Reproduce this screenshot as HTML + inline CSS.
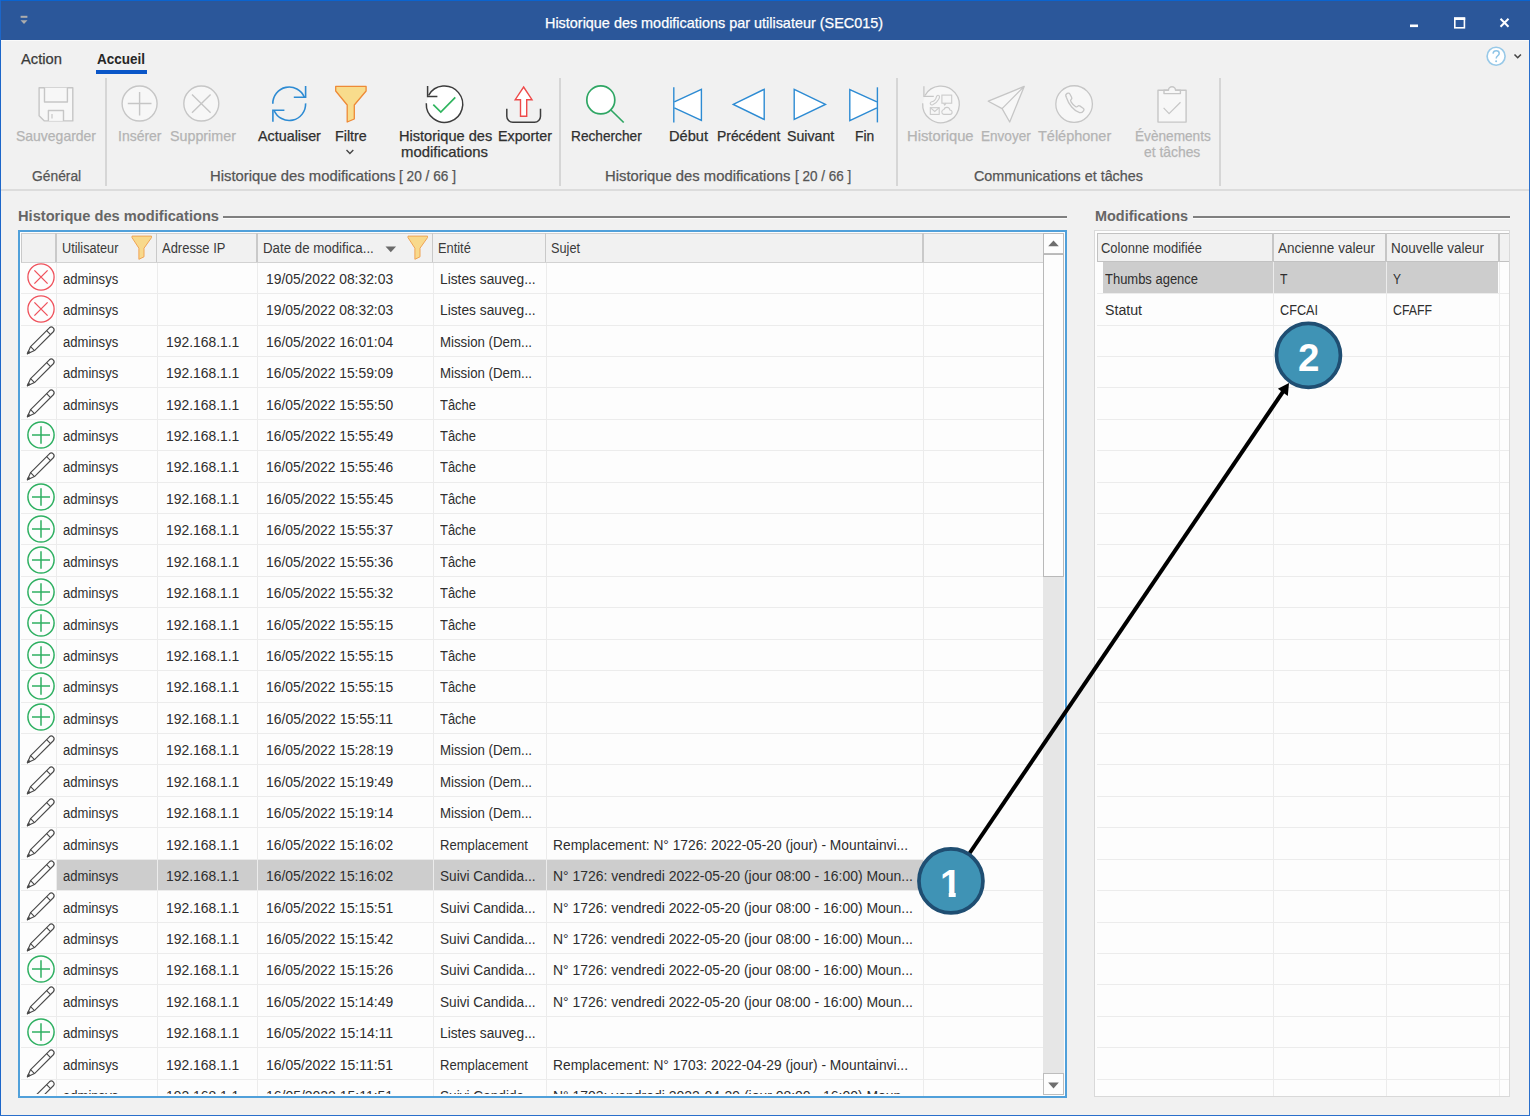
<!DOCTYPE html>
<html lang="fr"><head><meta charset="utf-8"><title>Historique des modifications par utilisateur (SEC015)</title>
<style>
html,body{margin:0;padding:0}
body{width:1530px;height:1116px;overflow:hidden;background:#f1f1f1;position:relative;font-family:"Liberation Sans",sans-serif;color:#333}
.r{position:absolute}
.t{position:absolute;white-space:pre;line-height:20px;height:20px;transform-origin:0 50%;color:#2b2b2b}
.rib{font:14.5px/20px "Liberation Sans",sans-serif}
.tab{font:15px/20px "Liberation Sans",sans-serif}
.tabb{font:bold 15px/20px "Liberation Sans",sans-serif}
.ttl{font:14.5px/20px "Liberation Sans",sans-serif}
.grid{font:15.5px/20px "Liberation Sans",sans-serif}
.gb{font:bold 15px/20px "Liberation Sans",sans-serif}
svg{position:absolute;overflow:visible}
.rib,.tab,.ttl{-webkit-text-stroke:0.25px currentColor}
</style></head>
<body>
<div class="r" style="left:0px;top:0px;width:1530px;height:40px;background:#2b579a;"></div>
<div class="r" style="left:0px;top:0px;width:1530px;height:1px;background:#0a64d0;"></div>
<div class="r" style="left:0px;top:0px;width:1.2px;height:1116px;background:#1c66c9;"></div>
<div class="r" style="left:1528.6px;top:40px;width:1.4px;height:1076px;background:#2a6fcb;"></div>
<div class="r" style="left:0px;top:1114.7px;width:1530px;height:1.3px;background:#2a6fcb;"></div>
<svg style="left:20px;top:15px" width="8" height="10" viewBox="0 0 8 10"><rect x="0.600" y="0.800" width="6.800" height="2" fill="#adadad"/><path d="M0.500 5.200h7L4 9.100z" fill="#adadad"/></svg>
<span class="t ttl" style="left:545.0px;top:12.6px;transform:scaleX(0.9938);color:#ffffff;">Historique des modifications par utilisateur (SEC015)</span>
<svg style="left:1400px;top:10.600px" width="120" height="24" viewBox="0 0 120 24"><rect x="10" y="13.5" width="8" height="2.6" fill="#fff"/><rect x="54.8" y="7.2" width="9.6" height="9.6" fill="none" stroke="#fff" stroke-width="1.6"/><rect x="54" y="6.4" width="11.2" height="2.6" fill="#fff"/><path d="M100.5 7.8l8 8m0-8l-8 8" stroke="#fff" stroke-width="2" fill="none"/></svg>
<svg style="left:1485px;top:46px" width="40" height="22" viewBox="0 0 40 22"><circle cx="11.100" cy="10.200" r="9" fill="#ffffff" stroke="#98c9e8" stroke-width="1.600"/><path d="M8 7.6c.3-2 1.7-2.8 3.200-2.800 1.800 0 3 1 3 2.600 0 2.200-3 2.600-3 5" fill="none" stroke="#8fc4e6" stroke-width="1.500"/><circle cx="11.100" cy="15.200" r="1" fill="#8fc4e6"/><path d="M29.500 8.500l3.200 3.200 3.200-3.200" fill="none" stroke="#444" stroke-width="1.600"/></svg>
<span class="t tab" style="left:21.0px;top:48.9px;transform:scaleX(0.9831);color:#3a3a3a;">Action</span>
<span class="t tabb" style="left:97.0px;top:48.9px;transform:scaleX(0.8996);color:#262626;">Accueil</span>
<div class="r" style="left:96px;top:70px;width:51px;height:4px;background:#0a56c8;"></div>
<div class="r" style="left:1px;top:189.2px;width:1527.6px;height:1.8px;background:#dcdcdc;"></div>
<div class="r" style="left:1px;top:40px;width:1527.6px;height:1px;background:#fafafa;"></div>
<div class="r" style="left:105px;top:78px;width:1.5px;height:108px;background:#d6d6d6;"></div>
<div class="r" style="left:559px;top:78px;width:1.5px;height:108px;background:#d6d6d6;"></div>
<div class="r" style="left:896px;top:78px;width:1.5px;height:108px;background:#d6d6d6;"></div>
<div class="r" style="left:1219px;top:78px;width:1.5px;height:108px;background:#d6d6d6;"></div>
<span class="t rib" style="left:16.1px;top:125.9px;transform:scaleX(0.9635);color:#b4b4b4;">Sauvegarder</span>
<span class="t rib" style="left:118.0px;top:125.9px;transform:scaleX(0.9637);color:#b4b4b4;">Insérer</span>
<span class="t rib" style="left:169.6px;top:125.9px;transform:scaleX(0.9852);color:#b4b4b4;">Supprimer</span>
<span class="t rib" style="left:258.3px;top:125.9px;transform:scaleX(0.9879);color:#2f2f2f;">Actualiser</span>
<span class="t rib" style="left:335.3px;top:125.9px;transform:scaleX(0.9865);color:#2f2f2f;">Filtre</span>
<span class="t rib" style="left:398.6px;top:125.9px;transform:scaleX(1.0055);color:#2f2f2f;">Historique des</span>
<span class="t rib" style="left:401.1px;top:141.9px;transform:scaleX(1.0269);color:#2f2f2f;">modifications</span>
<span class="t rib" style="left:497.5px;top:125.9px;transform:scaleX(0.9834);color:#2f2f2f;">Exporter</span>
<span class="t rib" style="left:570.8px;top:125.9px;transform:scaleX(0.9433);color:#2f2f2f;">Rechercher</span>
<span class="t rib" style="left:668.9px;top:125.9px;transform:scaleX(1.0077);color:#2f2f2f;">Début</span>
<span class="t rib" style="left:717.4px;top:125.9px;transform:scaleX(0.9575);color:#2f2f2f;">Précédent</span>
<span class="t rib" style="left:786.9px;top:125.9px;transform:scaleX(0.9757);color:#2f2f2f;">Suivant</span>
<span class="t rib" style="left:854.7px;top:125.9px;transform:scaleX(0.9526);color:#2f2f2f;">Fin</span>
<span class="t rib" style="left:907.4px;top:125.9px;transform:scaleX(1.0202);color:#b4b4b4;">Historique</span>
<span class="t rib" style="left:981.4px;top:125.9px;transform:scaleX(0.9342);color:#b4b4b4;">Envoyer</span>
<span class="t rib" style="left:1037.9px;top:125.9px;transform:scaleX(0.9978);color:#b4b4b4;">Téléphoner</span>
<span class="t rib" style="left:1134.7px;top:125.9px;transform:scaleX(0.9403);color:#b4b4b4;">Évènements</span>
<span class="t rib" style="left:1144.2px;top:141.9px;transform:scaleX(0.9568);color:#b4b4b4;">et tâches</span>
<span class="t rib" style="left:31.5px;top:166.1px;transform:scaleX(0.9536);color:#555555;">Général</span>
<span class="t rib" style="left:209.5px;top:166.1px;transform:scaleX(1.0218);color:#555555;">Historique des modifications</span>
<span class="t rib" style="left:399.3px;top:166.1px;transform:scaleX(0.9426);color:#555555;">[ 20 / 66 ]</span>
<span class="t rib" style="left:604.8px;top:166.1px;transform:scaleX(1.0218);color:#555555;">Historique des modifications</span>
<span class="t rib" style="left:794.6px;top:166.1px;transform:scaleX(0.9294);color:#555555;">[ 20 / 66 ]</span>
<span class="t rib" style="left:974.0px;top:166.1px;transform:scaleX(0.9885);color:#555555;">Communications et tâches</span>
<svg style="left:345px;top:148px" width="10" height="8" viewBox="0 0 10 8"><path d="M1.500 2l3.400 3.400L8.300 2" fill="none" stroke="#444" stroke-width="1.4"/></svg>
<svg style="left:0;top:80px" width="1530" height="48" viewBox="0 80 1530 48"><g fill="#f7f7f7" stroke="#c6c6c6" stroke-width="1.4" stroke-linejoin="round"><path d="M39.100 87.700H72.800V120.900H44.400L39.100 115.700z"/><path d="M44.500 87.700V102H67.400V87.700"/><path d="M48.400 120.900V110.500H63.500V120.900"/><path d="M52 114v4.500" stroke-width="1.200"/></g><g fill="#f7f7f7" stroke="#c6c6c6" stroke-width="1.4"><circle cx="139.600" cy="103.550" r="17.500"/><path d="M127.800 103.550H151.500M139.600 92.100V115.600" fill="none"/><circle cx="201.300" cy="103.550" r="17.500"/><path d="M192 94.600L210.600 112.700M210.600 94.600L192 112.700" fill="none"/></g><g fill="none" stroke="#2d8bd3" stroke-width="1.600"><path d="M272.800 103.800A16.400 16.400 0 0 1 304.400 97.300"/><path d="M305.600 86.100V97.300H293.800"/><path d="M305.600 103.400A16.400 16.400 0 0 1 274 110.200"/><path d="M272.900 121.700V110.200H284.400"/></g><path d="M335.700 86.400H366.100V91L354.300 105V119L347.200 122V105L335.700 91z" fill="#f8dc8c" stroke="#ee8a37" stroke-width="1.300" stroke-linejoin="round"/><g fill="none" stroke="#3d3d3d" stroke-width="1.500"><path d="M428.600 95.300A18.200 18.200 0 1 1 426.300 103.300" fill="#fff"/><path d="M427.600 86V96.500H437.400"/><path d="M433.300 104.700L440.800 112L455.300 97.400" stroke="#2fb45e" stroke-width="1.700"/></g><path d="M506.800 108.800V116.300a6 6 0 0 0 6 6H534.500a6 6 0 0 0 6-6V108.800" fill="none" stroke="#3d3d3d" stroke-width="1.500"/><path d="M523.600 87L532 99.700H526.700V116.300H520.500V99.700H515.200z" fill="#fff" stroke="#ee4a4a" stroke-width="1.400" stroke-linejoin="miter"/><circle cx="600.800" cy="99.900" r="14" fill="#fff" stroke="#2fa664" stroke-width="1.700"/><path d="M610.900 110L623.700 122.500" stroke="#2fa664" stroke-width="1.700"/><g fill="#fff" stroke="#2d8bd3" stroke-width="1.400" stroke-linejoin="miter"><path d="M674.300 101.800L701.400 89.300V120.500L674.300 107.800"/><path d="M673.800 87.300V122.500" /><path d="M733.300 104.400L764.200 89.300V119.500z"/><path d="M825.400 104.400L794.200 89.300V119.500z"/><path d="M876.900 101.800L849.800 89.500V120.600L876.900 107.800"/><path d="M877.400 87.300V122.400"/></g><g fill="none" stroke="#c6c6c6" stroke-width="1.300"><path d="M925 95.500A18.300 18.300 0 1 1 922.700 103.200" fill="#f7f7f7"/><path d="M923.900 86.300V96.300H933.800"/><g stroke="#cbcbcb" stroke-width="1.100"><rect x="941.900" y="95.100" width="9.800" height="8.100"/><path d="M943.600 103.200l1.100 1.900 1.400-1.900"/><rect x="930.300" y="107.700" width="8.900" height="6.700"/><path d="M930.300 107.700l4.450 3.800 4.450-3.800"/><path d="M943.700 114.400h6.200a2.200 2.200 0 0 0 0-4.400a3.100 3.100 0 0 0-6-.5a2.500 2.500 0 0 0-.2 4.900z"/><path d="M930.600 104.400c-1-1.200 0-2.300 1.200-2.600c2.500-.6 4-2.400 4.600-5c.3-1.300 1.500-2 2.600-1.200c.9.800.5 2.200-.3 3.600c-1.500 2.700-3.600 4.700-6 5.600c-.9.300-1.600.2-2.100-.4z"/></g></g><path d="M1024.200 86.400L988.300 101.200L1002.100 108.600L1009.700 122zM1024.200 86.400L1002.100 108.600" fill="#f7f7f7" stroke="#c6c6c6" stroke-width="1.300" stroke-linejoin="round"/><g fill="#f7f7f7" stroke="#c6c6c6" stroke-width="1.300"><circle cx="1074.100" cy="104.050" r="18.300"/><path d="M1066 96.500c-.8-1.500 0-2.300 1.200-3.100c1.200-.7 2.200-.3 2.800.8l1.600 3c.5 1 .3 1.800-.6 2.400c-.8.600-.5 1.400.2 2.500c1 1.600 2.600 3.300 4.200 4.400c.9.600 1.500.7 2.200-.1c.7-.8 1.600-.9 2.500-.3l3 2.100c1 .7 1.100 1.600.4 2.600c-.9 1.300-2 2.300-3.900 1.800c-5.500-1.500-11-8-13.600-16.100z" fill="none"/></g><g fill="#f7f7f7" stroke="#c6c6c6" stroke-width="1.400" stroke-linejoin="round"><rect x="1158" y="90.200" width="28.100" height="31.900"/><path d="M1164 90.200V93.600H1180.400V90.200H1175.500a3.500 3.500 0 0 0-7 0z" fill="#f7f7f7"/><path d="M1163.600 107.900L1169.100 113.600L1180.500 102.300" fill="none" stroke-width="1.200"/></g></svg>
<span class="t gb" style="left:18.0px;top:206.0px;transform:scaleX(0.9763);color:#666666;">Historique des modifications</span>
<div class="r" style="left:223px;top:216px;width:844px;height:1.5px;background:#808080;"></div>
<div class="r" style="left:223px;top:217.5px;width:844px;height:1.2px;background:#fcfcfc;"></div>
<span class="t gb" style="left:1095.0px;top:206.0px;transform:scaleX(0.9620);color:#666666;">Modifications</span>
<div class="r" style="left:1193px;top:216px;width:317px;height:1.5px;background:#808080;"></div>
<div class="r" style="left:1193px;top:217.5px;width:317px;height:1.2px;background:#fcfcfc;"></div>
<div class="r" style="left:18px;top:230px;width:1049px;height:867.5px;background:#fdfdfd;border:2px solid #50a0da;box-sizing:border-box"></div>
<div class="r" style="left:57.3px;top:860.23px;width:866.2px;height:29.82px;background:#cdcdcd;"></div>
<div class="r" style="left:21px;top:293.1px;width:1022px;height:1px;background:#ececec;"></div>
<div class="r" style="left:21px;top:324.5px;width:1022px;height:1px;background:#ececec;"></div>
<div class="r" style="left:21px;top:355.9px;width:1022px;height:1px;background:#ececec;"></div>
<div class="r" style="left:21px;top:387.3px;width:1022px;height:1px;background:#ececec;"></div>
<div class="r" style="left:21px;top:418.8px;width:1022px;height:1px;background:#ececec;"></div>
<div class="r" style="left:21px;top:450.2px;width:1022px;height:1px;background:#ececec;"></div>
<div class="r" style="left:21px;top:481.6px;width:1022px;height:1px;background:#ececec;"></div>
<div class="r" style="left:21px;top:513.0px;width:1022px;height:1px;background:#ececec;"></div>
<div class="r" style="left:21px;top:544.4px;width:1022px;height:1px;background:#ececec;"></div>
<div class="r" style="left:21px;top:575.9px;width:1022px;height:1px;background:#ececec;"></div>
<div class="r" style="left:21px;top:607.3px;width:1022px;height:1px;background:#ececec;"></div>
<div class="r" style="left:21px;top:638.7px;width:1022px;height:1px;background:#ececec;"></div>
<div class="r" style="left:21px;top:670.1px;width:1022px;height:1px;background:#ececec;"></div>
<div class="r" style="left:21px;top:701.5px;width:1022px;height:1px;background:#ececec;"></div>
<div class="r" style="left:21px;top:733.0px;width:1022px;height:1px;background:#ececec;"></div>
<div class="r" style="left:21px;top:764.4px;width:1022px;height:1px;background:#ececec;"></div>
<div class="r" style="left:21px;top:795.8px;width:1022px;height:1px;background:#ececec;"></div>
<div class="r" style="left:21px;top:827.2px;width:1022px;height:1px;background:#ececec;"></div>
<div class="r" style="left:21px;top:858.6px;width:1022px;height:1px;background:#ececec;"></div>
<div class="r" style="left:21px;top:890.1px;width:1022px;height:1px;background:#ececec;"></div>
<div class="r" style="left:21px;top:921.5px;width:1022px;height:1px;background:#ececec;"></div>
<div class="r" style="left:21px;top:952.9px;width:1022px;height:1px;background:#ececec;"></div>
<div class="r" style="left:21px;top:984.3px;width:1022px;height:1px;background:#ececec;"></div>
<div class="r" style="left:21px;top:1015.7px;width:1022px;height:1px;background:#ececec;"></div>
<div class="r" style="left:21px;top:1047.2px;width:1022px;height:1px;background:#ececec;"></div>
<div class="r" style="left:21px;top:1078.6px;width:1022px;height:1px;background:#ececec;"></div>
<div class="r" style="left:56.0px;top:262px;width:1px;height:833.5px;background:#ececec;"></div>
<div class="r" style="left:156.5px;top:262px;width:1px;height:833.5px;background:#ececec;"></div>
<div class="r" style="left:257.0px;top:262px;width:1px;height:833.5px;background:#ececec;"></div>
<div class="r" style="left:432.5px;top:262px;width:1px;height:833.5px;background:#ececec;"></div>
<div class="r" style="left:545.5px;top:262px;width:1px;height:833.5px;background:#ececec;"></div>
<div class="r" style="left:923.0px;top:262px;width:1px;height:833.5px;background:#ececec;"></div>
<div class="r" style="left:21px;top:233.3px;width:1022.3px;height:29.6px;background:#f1f1f1;box-sizing:border-box;border-top:1px solid #d0d0d0;border-left:1px solid #c9c9c9;border-bottom:1.8px solid #d2d2d2"></div>
<div class="r" style="left:55.1px;top:233.3px;width:1.8px;height:28.5px;background:#c9c9c9;"></div>
<div class="r" style="left:155.6px;top:233.3px;width:1.8px;height:28.5px;background:#c9c9c9;"></div>
<div class="r" style="left:256.1px;top:233.3px;width:1.8px;height:28.5px;background:#c9c9c9;"></div>
<div class="r" style="left:431.6px;top:233.3px;width:1.8px;height:28.5px;background:#c9c9c9;"></div>
<div class="r" style="left:544.6px;top:233.3px;width:1.8px;height:28.5px;background:#c9c9c9;"></div>
<div class="r" style="left:922.4px;top:233.3px;width:1.8px;height:28.5px;background:#c9c9c9;"></div>
<span class="t grid" style="left:61.7px;top:237.7px;transform:scaleX(0.8183);color:#3a3a3a;">Utilisateur</span>
<span class="t grid" style="left:161.5px;top:237.7px;transform:scaleX(0.8363);color:#3a3a3a;">Adresse IP</span>
<span class="t grid" style="left:262.6px;top:237.7px;transform:scaleX(0.8574);color:#3a3a3a;">Date de modifica...</span>
<span class="t grid" style="left:438.4px;top:237.7px;transform:scaleX(0.8274);color:#3a3a3a;">Entité</span>
<span class="t grid" style="left:551.4px;top:237.7px;transform:scaleX(0.8205);color:#3a3a3a;">Sujet</span>
<svg style="left:385px;top:246px" width="12" height="7" viewBox="0 0 12 7"><path d="M0.500 0.600h10.600L5.800 6.300z" fill="#6a6a6a"/></svg>
<svg style="left:130.6px;top:235px" width="21" height="25" viewBox="0 0 21 25"><path d="M1 1.100H20.500V2.600L13 13.200V21.800L7.900 24.300V13.200L1 2.600z" fill="#f8d98c" stroke="#f0a454" stroke-width="1" stroke-linejoin="round"/></svg>
<svg style="left:407px;top:235px" width="21" height="25" viewBox="0 0 21 25"><path d="M1 1.100H20.500V2.600L13 13.200V21.800L7.900 24.300V13.200L1 2.600z" fill="#f8d98c" stroke="#f0a454" stroke-width="1" stroke-linejoin="round"/></svg>
<div class="r" style="left:1043.3px;top:233px;width:20.5px;height:861.5px;background:#e6e6e6;"></div>
<div class="r" style="left:1043.3px;top:233px;width:20.5px;height:20.5px;background:#fdfdfd;box-sizing:border-box;border:1px solid #bdbdbd"></div>
<svg style="left:1048px;top:240px" width="11" height="7" viewBox="0 0 11 7"><path d="M0.200 6.200L5.500 0.400l5.300 5.800z" fill="#6e6e6e"/></svg>
<div class="r" style="left:1043.3px;top:254.3px;width:20.5px;height:322.7px;background:#fdfdfd;box-sizing:border-box;border:1px solid #b9b9b9"></div>
<div class="r" style="left:1043.3px;top:1073.4px;width:20.5px;height:21.2px;background:#fdfdfd;box-sizing:border-box;border:1px solid #bdbdbd"></div>
<svg style="left:1048px;top:1082px" width="11" height="7" viewBox="0 0 11 7"><path d="M0.200 0.600h10.600L5.500 6.400z" fill="#6e6e6e"/></svg>
<div class="r" style="left:20px;top:262px;width:1023px;height:832.3px;overflow:hidden">
<svg style="left:5.8px;top:0.4px" width="30" height="30" viewBox="-15 -15 30 30"><circle r="13.1" fill="none" stroke="#ef525c" stroke-width="1.300"/><path d="M-6.600 -6.600L6.600 6.600M6.600 -6.600L-6.600 6.600" stroke="#ef525c" stroke-width="1.300" fill="none"/></svg>
<span class="t grid" style="left:42.9px;top:6.7px;transform:scaleX(0.8432);color:#2e2e2e;">adminsys</span>
<span class="t grid" style="left:245.9px;top:6.7px;transform:scaleX(0.8937);color:#2e2e2e;">19/05/2022 08:32:03</span>
<span class="t grid" style="left:420.1px;top:6.7px;transform:scaleX(0.8876);color:#2e2e2e;">Listes sauveg...</span>
<svg style="left:5.8px;top:31.9px" width="30" height="30" viewBox="-15 -15 30 30"><circle r="13.1" fill="none" stroke="#ef525c" stroke-width="1.300"/><path d="M-6.600 -6.600L6.600 6.600M6.600 -6.600L-6.600 6.600" stroke="#ef525c" stroke-width="1.300" fill="none"/></svg>
<span class="t grid" style="left:42.9px;top:38.2px;transform:scaleX(0.8432);color:#2e2e2e;">adminsys</span>
<span class="t grid" style="left:245.9px;top:38.2px;transform:scaleX(0.8937);color:#2e2e2e;">19/05/2022 08:32:03</span>
<span class="t grid" style="left:420.1px;top:38.2px;transform:scaleX(0.8876);color:#2e2e2e;">Listes sauveg...</span>
<svg style="left:5.8px;top:63.3px" width="30" height="30" viewBox="-15 -15 30 30"><g fill="none" stroke="#4a4a4a" stroke-width="1.150" stroke-linejoin="round"><path d="M-13.600 13.800L-6.500 10.600L12.350 -8.250A2.800 2.800 0 0 0 8.400 -12.200L-10.400 6.600z"/><path d="M-6.500 10.600L-10.400 6.600M5.600 -9.400L9.550 -5.450"/><path d="M-13.600 13.800l2.600 -1.200 -1.500 -1.500z" fill="#4a4a4a"/></g></svg>
<span class="t grid" style="left:42.9px;top:69.6px;transform:scaleX(0.8432);color:#2e2e2e;">adminsys</span>
<span class="t grid" style="left:146.0px;top:69.6px;transform:scaleX(0.8951);color:#2e2e2e;">192.168.1.1</span>
<span class="t grid" style="left:245.9px;top:69.6px;transform:scaleX(0.8937);color:#2e2e2e;">16/05/2022 16:01:04</span>
<span class="t grid" style="left:420.1px;top:69.6px;transform:scaleX(0.8546);color:#2e2e2e;">Mission (Dem...</span>
<svg style="left:5.8px;top:94.7px" width="30" height="30" viewBox="-15 -15 30 30"><g fill="none" stroke="#4a4a4a" stroke-width="1.150" stroke-linejoin="round"><path d="M-13.600 13.800L-6.500 10.600L12.350 -8.250A2.800 2.800 0 0 0 8.400 -12.200L-10.400 6.600z"/><path d="M-6.500 10.600L-10.400 6.600M5.600 -9.400L9.550 -5.450"/><path d="M-13.600 13.800l2.600 -1.200 -1.500 -1.500z" fill="#4a4a4a"/></g></svg>
<span class="t grid" style="left:42.9px;top:101.0px;transform:scaleX(0.8432);color:#2e2e2e;">adminsys</span>
<span class="t grid" style="left:146.0px;top:101.0px;transform:scaleX(0.8951);color:#2e2e2e;">192.168.1.1</span>
<span class="t grid" style="left:245.9px;top:101.0px;transform:scaleX(0.8937);color:#2e2e2e;">16/05/2022 15:59:09</span>
<span class="t grid" style="left:420.1px;top:101.0px;transform:scaleX(0.8546);color:#2e2e2e;">Mission (Dem...</span>
<svg style="left:5.8px;top:126.1px" width="30" height="30" viewBox="-15 -15 30 30"><g fill="none" stroke="#4a4a4a" stroke-width="1.150" stroke-linejoin="round"><path d="M-13.600 13.800L-6.500 10.600L12.350 -8.250A2.800 2.800 0 0 0 8.400 -12.200L-10.400 6.600z"/><path d="M-6.500 10.600L-10.400 6.600M5.600 -9.400L9.550 -5.450"/><path d="M-13.600 13.800l2.600 -1.200 -1.500 -1.500z" fill="#4a4a4a"/></g></svg>
<span class="t grid" style="left:42.9px;top:132.5px;transform:scaleX(0.8432);color:#2e2e2e;">adminsys</span>
<span class="t grid" style="left:146.0px;top:132.5px;transform:scaleX(0.8951);color:#2e2e2e;">192.168.1.1</span>
<span class="t grid" style="left:245.9px;top:132.5px;transform:scaleX(0.8937);color:#2e2e2e;">16/05/2022 15:55:50</span>
<span class="t grid" style="left:420.1px;top:132.5px;transform:scaleX(0.8354);color:#2e2e2e;">Tâche</span>
<svg style="left:5.8px;top:157.6px" width="30" height="30" viewBox="-15 -15 30 30"><circle r="13.1" fill="none" stroke="#2fb062" stroke-width="1.500"/><path d="M-9 0H9M0 -8.700V8.700" stroke="#2fb062" stroke-width="1.500" fill="none"/></svg>
<span class="t grid" style="left:42.9px;top:163.9px;transform:scaleX(0.8432);color:#2e2e2e;">adminsys</span>
<span class="t grid" style="left:146.0px;top:163.9px;transform:scaleX(0.8951);color:#2e2e2e;">192.168.1.1</span>
<span class="t grid" style="left:245.9px;top:163.9px;transform:scaleX(0.8937);color:#2e2e2e;">16/05/2022 15:55:49</span>
<span class="t grid" style="left:420.1px;top:163.9px;transform:scaleX(0.8354);color:#2e2e2e;">Tâche</span>
<svg style="left:5.8px;top:189.0px" width="30" height="30" viewBox="-15 -15 30 30"><g fill="none" stroke="#4a4a4a" stroke-width="1.150" stroke-linejoin="round"><path d="M-13.600 13.800L-6.500 10.600L12.350 -8.250A2.800 2.800 0 0 0 8.400 -12.200L-10.400 6.600z"/><path d="M-6.500 10.600L-10.400 6.600M5.600 -9.400L9.550 -5.450"/><path d="M-13.600 13.800l2.600 -1.200 -1.500 -1.500z" fill="#4a4a4a"/></g></svg>
<span class="t grid" style="left:42.9px;top:195.4px;transform:scaleX(0.8432);color:#2e2e2e;">adminsys</span>
<span class="t grid" style="left:146.0px;top:195.4px;transform:scaleX(0.8951);color:#2e2e2e;">192.168.1.1</span>
<span class="t grid" style="left:245.9px;top:195.4px;transform:scaleX(0.8937);color:#2e2e2e;">16/05/2022 15:55:46</span>
<span class="t grid" style="left:420.1px;top:195.4px;transform:scaleX(0.8354);color:#2e2e2e;">Tâche</span>
<svg style="left:5.8px;top:220.4px" width="30" height="30" viewBox="-15 -15 30 30"><circle r="13.1" fill="none" stroke="#2fb062" stroke-width="1.500"/><path d="M-9 0H9M0 -8.700V8.700" stroke="#2fb062" stroke-width="1.500" fill="none"/></svg>
<span class="t grid" style="left:42.9px;top:226.8px;transform:scaleX(0.8432);color:#2e2e2e;">adminsys</span>
<span class="t grid" style="left:146.0px;top:226.8px;transform:scaleX(0.8951);color:#2e2e2e;">192.168.1.1</span>
<span class="t grid" style="left:245.9px;top:226.8px;transform:scaleX(0.8937);color:#2e2e2e;">16/05/2022 15:55:45</span>
<span class="t grid" style="left:420.1px;top:226.8px;transform:scaleX(0.8354);color:#2e2e2e;">Tâche</span>
<svg style="left:5.8px;top:251.8px" width="30" height="30" viewBox="-15 -15 30 30"><circle r="13.1" fill="none" stroke="#2fb062" stroke-width="1.500"/><path d="M-9 0H9M0 -8.700V8.700" stroke="#2fb062" stroke-width="1.500" fill="none"/></svg>
<span class="t grid" style="left:42.9px;top:258.2px;transform:scaleX(0.8432);color:#2e2e2e;">adminsys</span>
<span class="t grid" style="left:146.0px;top:258.2px;transform:scaleX(0.8951);color:#2e2e2e;">192.168.1.1</span>
<span class="t grid" style="left:245.9px;top:258.2px;transform:scaleX(0.8937);color:#2e2e2e;">16/05/2022 15:55:37</span>
<span class="t grid" style="left:420.1px;top:258.2px;transform:scaleX(0.8354);color:#2e2e2e;">Tâche</span>
<svg style="left:5.8px;top:283.2px" width="30" height="30" viewBox="-15 -15 30 30"><circle r="13.1" fill="none" stroke="#2fb062" stroke-width="1.500"/><path d="M-9 0H9M0 -8.700V8.700" stroke="#2fb062" stroke-width="1.500" fill="none"/></svg>
<span class="t grid" style="left:42.9px;top:289.7px;transform:scaleX(0.8432);color:#2e2e2e;">adminsys</span>
<span class="t grid" style="left:146.0px;top:289.7px;transform:scaleX(0.8951);color:#2e2e2e;">192.168.1.1</span>
<span class="t grid" style="left:245.9px;top:289.7px;transform:scaleX(0.8937);color:#2e2e2e;">16/05/2022 15:55:36</span>
<span class="t grid" style="left:420.1px;top:289.7px;transform:scaleX(0.8354);color:#2e2e2e;">Tâche</span>
<svg style="left:5.8px;top:314.6px" width="30" height="30" viewBox="-15 -15 30 30"><circle r="13.1" fill="none" stroke="#2fb062" stroke-width="1.500"/><path d="M-9 0H9M0 -8.700V8.700" stroke="#2fb062" stroke-width="1.500" fill="none"/></svg>
<span class="t grid" style="left:42.9px;top:321.1px;transform:scaleX(0.8432);color:#2e2e2e;">adminsys</span>
<span class="t grid" style="left:146.0px;top:321.1px;transform:scaleX(0.8951);color:#2e2e2e;">192.168.1.1</span>
<span class="t grid" style="left:245.9px;top:321.1px;transform:scaleX(0.8937);color:#2e2e2e;">16/05/2022 15:55:32</span>
<span class="t grid" style="left:420.1px;top:321.1px;transform:scaleX(0.8354);color:#2e2e2e;">Tâche</span>
<svg style="left:5.8px;top:346.1px" width="30" height="30" viewBox="-15 -15 30 30"><circle r="13.1" fill="none" stroke="#2fb062" stroke-width="1.500"/><path d="M-9 0H9M0 -8.700V8.700" stroke="#2fb062" stroke-width="1.500" fill="none"/></svg>
<span class="t grid" style="left:42.9px;top:352.6px;transform:scaleX(0.8432);color:#2e2e2e;">adminsys</span>
<span class="t grid" style="left:146.0px;top:352.6px;transform:scaleX(0.8951);color:#2e2e2e;">192.168.1.1</span>
<span class="t grid" style="left:245.9px;top:352.6px;transform:scaleX(0.8937);color:#2e2e2e;">16/05/2022 15:55:15</span>
<span class="t grid" style="left:420.1px;top:352.6px;transform:scaleX(0.8354);color:#2e2e2e;">Tâche</span>
<svg style="left:5.8px;top:377.5px" width="30" height="30" viewBox="-15 -15 30 30"><circle r="13.1" fill="none" stroke="#2fb062" stroke-width="1.500"/><path d="M-9 0H9M0 -8.700V8.700" stroke="#2fb062" stroke-width="1.500" fill="none"/></svg>
<span class="t grid" style="left:42.9px;top:384.0px;transform:scaleX(0.8432);color:#2e2e2e;">adminsys</span>
<span class="t grid" style="left:146.0px;top:384.0px;transform:scaleX(0.8951);color:#2e2e2e;">192.168.1.1</span>
<span class="t grid" style="left:245.9px;top:384.0px;transform:scaleX(0.8937);color:#2e2e2e;">16/05/2022 15:55:15</span>
<span class="t grid" style="left:420.1px;top:384.0px;transform:scaleX(0.8354);color:#2e2e2e;">Tâche</span>
<svg style="left:5.8px;top:408.9px" width="30" height="30" viewBox="-15 -15 30 30"><circle r="13.1" fill="none" stroke="#2fb062" stroke-width="1.500"/><path d="M-9 0H9M0 -8.700V8.700" stroke="#2fb062" stroke-width="1.500" fill="none"/></svg>
<span class="t grid" style="left:42.9px;top:415.4px;transform:scaleX(0.8432);color:#2e2e2e;">adminsys</span>
<span class="t grid" style="left:146.0px;top:415.4px;transform:scaleX(0.8951);color:#2e2e2e;">192.168.1.1</span>
<span class="t grid" style="left:245.9px;top:415.4px;transform:scaleX(0.8937);color:#2e2e2e;">16/05/2022 15:55:15</span>
<span class="t grid" style="left:420.1px;top:415.4px;transform:scaleX(0.8354);color:#2e2e2e;">Tâche</span>
<svg style="left:5.8px;top:440.3px" width="30" height="30" viewBox="-15 -15 30 30"><circle r="13.1" fill="none" stroke="#2fb062" stroke-width="1.500"/><path d="M-9 0H9M0 -8.700V8.700" stroke="#2fb062" stroke-width="1.500" fill="none"/></svg>
<span class="t grid" style="left:42.9px;top:446.9px;transform:scaleX(0.8432);color:#2e2e2e;">adminsys</span>
<span class="t grid" style="left:146.0px;top:446.9px;transform:scaleX(0.8951);color:#2e2e2e;">192.168.1.1</span>
<span class="t grid" style="left:245.9px;top:446.9px;transform:scaleX(0.9009);color:#2e2e2e;">16/05/2022 15:55:11</span>
<span class="t grid" style="left:420.1px;top:446.9px;transform:scaleX(0.8354);color:#2e2e2e;">Tâche</span>
<svg style="left:5.8px;top:471.8px" width="30" height="30" viewBox="-15 -15 30 30"><g fill="none" stroke="#4a4a4a" stroke-width="1.150" stroke-linejoin="round"><path d="M-13.600 13.800L-6.500 10.600L12.350 -8.250A2.800 2.800 0 0 0 8.400 -12.200L-10.400 6.600z"/><path d="M-6.500 10.600L-10.400 6.600M5.600 -9.400L9.550 -5.450"/><path d="M-13.600 13.800l2.600 -1.200 -1.500 -1.500z" fill="#4a4a4a"/></g></svg>
<span class="t grid" style="left:42.9px;top:478.3px;transform:scaleX(0.8432);color:#2e2e2e;">adminsys</span>
<span class="t grid" style="left:146.0px;top:478.3px;transform:scaleX(0.8951);color:#2e2e2e;">192.168.1.1</span>
<span class="t grid" style="left:245.9px;top:478.3px;transform:scaleX(0.8937);color:#2e2e2e;">16/05/2022 15:28:19</span>
<span class="t grid" style="left:420.1px;top:478.3px;transform:scaleX(0.8546);color:#2e2e2e;">Mission (Dem...</span>
<svg style="left:5.8px;top:503.2px" width="30" height="30" viewBox="-15 -15 30 30"><g fill="none" stroke="#4a4a4a" stroke-width="1.150" stroke-linejoin="round"><path d="M-13.600 13.800L-6.500 10.600L12.350 -8.250A2.800 2.800 0 0 0 8.400 -12.200L-10.400 6.600z"/><path d="M-6.500 10.600L-10.400 6.600M5.600 -9.400L9.550 -5.450"/><path d="M-13.600 13.800l2.600 -1.200 -1.500 -1.500z" fill="#4a4a4a"/></g></svg>
<span class="t grid" style="left:42.9px;top:509.8px;transform:scaleX(0.8432);color:#2e2e2e;">adminsys</span>
<span class="t grid" style="left:146.0px;top:509.8px;transform:scaleX(0.8951);color:#2e2e2e;">192.168.1.1</span>
<span class="t grid" style="left:245.9px;top:509.8px;transform:scaleX(0.8937);color:#2e2e2e;">16/05/2022 15:19:49</span>
<span class="t grid" style="left:420.1px;top:509.8px;transform:scaleX(0.8546);color:#2e2e2e;">Mission (Dem...</span>
<svg style="left:5.8px;top:534.6px" width="30" height="30" viewBox="-15 -15 30 30"><g fill="none" stroke="#4a4a4a" stroke-width="1.150" stroke-linejoin="round"><path d="M-13.600 13.800L-6.500 10.600L12.350 -8.250A2.800 2.800 0 0 0 8.400 -12.200L-10.400 6.600z"/><path d="M-6.500 10.600L-10.400 6.600M5.600 -9.400L9.550 -5.450"/><path d="M-13.600 13.800l2.600 -1.200 -1.500 -1.500z" fill="#4a4a4a"/></g></svg>
<span class="t grid" style="left:42.9px;top:541.2px;transform:scaleX(0.8432);color:#2e2e2e;">adminsys</span>
<span class="t grid" style="left:146.0px;top:541.2px;transform:scaleX(0.8951);color:#2e2e2e;">192.168.1.1</span>
<span class="t grid" style="left:245.9px;top:541.2px;transform:scaleX(0.8937);color:#2e2e2e;">16/05/2022 15:19:14</span>
<span class="t grid" style="left:420.1px;top:541.2px;transform:scaleX(0.8546);color:#2e2e2e;">Mission (Dem...</span>
<svg style="left:5.8px;top:566.0px" width="30" height="30" viewBox="-15 -15 30 30"><g fill="none" stroke="#4a4a4a" stroke-width="1.150" stroke-linejoin="round"><path d="M-13.600 13.800L-6.500 10.600L12.350 -8.250A2.800 2.800 0 0 0 8.400 -12.200L-10.400 6.600z"/><path d="M-6.500 10.600L-10.400 6.600M5.600 -9.400L9.550 -5.450"/><path d="M-13.600 13.800l2.600 -1.200 -1.500 -1.500z" fill="#4a4a4a"/></g></svg>
<span class="t grid" style="left:42.9px;top:572.6px;transform:scaleX(0.8432);color:#2e2e2e;">adminsys</span>
<span class="t grid" style="left:146.0px;top:572.6px;transform:scaleX(0.8951);color:#2e2e2e;">192.168.1.1</span>
<span class="t grid" style="left:245.9px;top:572.6px;transform:scaleX(0.8937);color:#2e2e2e;">16/05/2022 15:16:02</span>
<span class="t grid" style="left:420.1px;top:572.6px;transform:scaleX(0.8441);color:#2e2e2e;">Remplacement</span>
<span class="t grid" style="left:533.0px;top:572.6px;transform:scaleX(0.8896);color:#2e2e2e;">Remplacement: N° 1726: 2022-05-20 (jour) - Mountainvi...</span>
<svg style="left:5.8px;top:597.4px" width="30" height="30" viewBox="-15 -15 30 30"><g fill="none" stroke="#4a4a4a" stroke-width="1.150" stroke-linejoin="round"><path d="M-13.600 13.800L-6.500 10.600L12.350 -8.250A2.800 2.800 0 0 0 8.400 -12.200L-10.400 6.600z"/><path d="M-6.500 10.600L-10.400 6.600M5.600 -9.400L9.550 -5.450"/><path d="M-13.600 13.800l2.600 -1.200 -1.500 -1.500z" fill="#4a4a4a"/></g></svg>
<span class="t grid" style="left:42.9px;top:604.1px;transform:scaleX(0.8432);color:#2e2e2e;">adminsys</span>
<span class="t grid" style="left:146.0px;top:604.1px;transform:scaleX(0.8951);color:#2e2e2e;">192.168.1.1</span>
<span class="t grid" style="left:245.9px;top:604.1px;transform:scaleX(0.8937);color:#2e2e2e;">16/05/2022 15:16:02</span>
<span class="t grid" style="left:420.1px;top:604.1px;transform:scaleX(0.8797);color:#2e2e2e;">Suivi Candida...</span>
<span class="t grid" style="left:533.0px;top:604.1px;transform:scaleX(0.9000);color:#2e2e2e;">N° 1726: vendredi 2022-05-20 (jour 08:00 - 16:00) Moun...</span>
<svg style="left:5.8px;top:628.9px" width="30" height="30" viewBox="-15 -15 30 30"><g fill="none" stroke="#4a4a4a" stroke-width="1.150" stroke-linejoin="round"><path d="M-13.600 13.800L-6.500 10.600L12.350 -8.250A2.800 2.800 0 0 0 8.400 -12.200L-10.400 6.600z"/><path d="M-6.500 10.600L-10.400 6.600M5.600 -9.400L9.550 -5.450"/><path d="M-13.600 13.800l2.600 -1.200 -1.500 -1.500z" fill="#4a4a4a"/></g></svg>
<span class="t grid" style="left:42.9px;top:635.5px;transform:scaleX(0.8432);color:#2e2e2e;">adminsys</span>
<span class="t grid" style="left:146.0px;top:635.5px;transform:scaleX(0.8951);color:#2e2e2e;">192.168.1.1</span>
<span class="t grid" style="left:245.9px;top:635.5px;transform:scaleX(0.8937);color:#2e2e2e;">16/05/2022 15:15:51</span>
<span class="t grid" style="left:420.1px;top:635.5px;transform:scaleX(0.8797);color:#2e2e2e;">Suivi Candida...</span>
<span class="t grid" style="left:533.0px;top:635.5px;transform:scaleX(0.9000);color:#2e2e2e;">N° 1726: vendredi 2022-05-20 (jour 08:00 - 16:00) Moun...</span>
<svg style="left:5.8px;top:660.3px" width="30" height="30" viewBox="-15 -15 30 30"><g fill="none" stroke="#4a4a4a" stroke-width="1.150" stroke-linejoin="round"><path d="M-13.600 13.800L-6.500 10.600L12.350 -8.250A2.800 2.800 0 0 0 8.400 -12.200L-10.400 6.600z"/><path d="M-6.500 10.600L-10.400 6.600M5.600 -9.400L9.550 -5.450"/><path d="M-13.600 13.800l2.600 -1.200 -1.500 -1.500z" fill="#4a4a4a"/></g></svg>
<span class="t grid" style="left:42.9px;top:667.0px;transform:scaleX(0.8432);color:#2e2e2e;">adminsys</span>
<span class="t grid" style="left:146.0px;top:667.0px;transform:scaleX(0.8951);color:#2e2e2e;">192.168.1.1</span>
<span class="t grid" style="left:245.9px;top:667.0px;transform:scaleX(0.8937);color:#2e2e2e;">16/05/2022 15:15:42</span>
<span class="t grid" style="left:420.1px;top:667.0px;transform:scaleX(0.8797);color:#2e2e2e;">Suivi Candida...</span>
<span class="t grid" style="left:533.0px;top:667.0px;transform:scaleX(0.9000);color:#2e2e2e;">N° 1726: vendredi 2022-05-20 (jour 08:00 - 16:00) Moun...</span>
<svg style="left:5.8px;top:691.7px" width="30" height="30" viewBox="-15 -15 30 30"><circle r="13.1" fill="none" stroke="#2fb062" stroke-width="1.500"/><path d="M-9 0H9M0 -8.700V8.700" stroke="#2fb062" stroke-width="1.500" fill="none"/></svg>
<span class="t grid" style="left:42.9px;top:698.4px;transform:scaleX(0.8432);color:#2e2e2e;">adminsys</span>
<span class="t grid" style="left:146.0px;top:698.4px;transform:scaleX(0.8951);color:#2e2e2e;">192.168.1.1</span>
<span class="t grid" style="left:245.9px;top:698.4px;transform:scaleX(0.8937);color:#2e2e2e;">16/05/2022 15:15:26</span>
<span class="t grid" style="left:420.1px;top:698.4px;transform:scaleX(0.8797);color:#2e2e2e;">Suivi Candida...</span>
<span class="t grid" style="left:533.0px;top:698.4px;transform:scaleX(0.9000);color:#2e2e2e;">N° 1726: vendredi 2022-05-20 (jour 08:00 - 16:00) Moun...</span>
<svg style="left:5.8px;top:723.1px" width="30" height="30" viewBox="-15 -15 30 30"><g fill="none" stroke="#4a4a4a" stroke-width="1.150" stroke-linejoin="round"><path d="M-13.600 13.800L-6.500 10.600L12.350 -8.250A2.800 2.800 0 0 0 8.400 -12.200L-10.400 6.600z"/><path d="M-6.500 10.600L-10.400 6.600M5.600 -9.400L9.550 -5.450"/><path d="M-13.600 13.800l2.600 -1.200 -1.500 -1.500z" fill="#4a4a4a"/></g></svg>
<span class="t grid" style="left:42.9px;top:729.8px;transform:scaleX(0.8432);color:#2e2e2e;">adminsys</span>
<span class="t grid" style="left:146.0px;top:729.8px;transform:scaleX(0.8951);color:#2e2e2e;">192.168.1.1</span>
<span class="t grid" style="left:245.9px;top:729.8px;transform:scaleX(0.8937);color:#2e2e2e;">16/05/2022 15:14:49</span>
<span class="t grid" style="left:420.1px;top:729.8px;transform:scaleX(0.8797);color:#2e2e2e;">Suivi Candida...</span>
<span class="t grid" style="left:533.0px;top:729.8px;transform:scaleX(0.9000);color:#2e2e2e;">N° 1726: vendredi 2022-05-20 (jour 08:00 - 16:00) Moun...</span>
<svg style="left:5.8px;top:754.5px" width="30" height="30" viewBox="-15 -15 30 30"><circle r="13.1" fill="none" stroke="#2fb062" stroke-width="1.500"/><path d="M-9 0H9M0 -8.700V8.700" stroke="#2fb062" stroke-width="1.500" fill="none"/></svg>
<span class="t grid" style="left:42.9px;top:761.3px;transform:scaleX(0.8432);color:#2e2e2e;">adminsys</span>
<span class="t grid" style="left:146.0px;top:761.3px;transform:scaleX(0.8951);color:#2e2e2e;">192.168.1.1</span>
<span class="t grid" style="left:245.9px;top:761.3px;transform:scaleX(0.9009);color:#2e2e2e;">16/05/2022 15:14:11</span>
<span class="t grid" style="left:420.1px;top:761.3px;transform:scaleX(0.8876);color:#2e2e2e;">Listes sauveg...</span>
<svg style="left:5.8px;top:786.0px" width="30" height="30" viewBox="-15 -15 30 30"><g fill="none" stroke="#4a4a4a" stroke-width="1.150" stroke-linejoin="round"><path d="M-13.600 13.800L-6.500 10.600L12.350 -8.250A2.800 2.800 0 0 0 8.400 -12.200L-10.400 6.600z"/><path d="M-6.500 10.600L-10.400 6.600M5.600 -9.400L9.550 -5.450"/><path d="M-13.600 13.800l2.600 -1.200 -1.500 -1.500z" fill="#4a4a4a"/></g></svg>
<span class="t grid" style="left:42.9px;top:792.7px;transform:scaleX(0.8432);color:#2e2e2e;">adminsys</span>
<span class="t grid" style="left:146.0px;top:792.7px;transform:scaleX(0.8951);color:#2e2e2e;">192.168.1.1</span>
<span class="t grid" style="left:245.9px;top:792.7px;transform:scaleX(0.9009);color:#2e2e2e;">16/05/2022 15:11:51</span>
<span class="t grid" style="left:420.1px;top:792.7px;transform:scaleX(0.8441);color:#2e2e2e;">Remplacement</span>
<span class="t grid" style="left:533.0px;top:792.7px;transform:scaleX(0.8896);color:#2e2e2e;">Remplacement: N° 1703: 2022-04-29 (jour) - Mountainvi...</span>
<svg style="left:5.8px;top:817.4px" width="30" height="30" viewBox="-15 -15 30 30"><g fill="none" stroke="#4a4a4a" stroke-width="1.150" stroke-linejoin="round"><path d="M-13.600 13.800L-6.500 10.600L12.350 -8.250A2.800 2.800 0 0 0 8.400 -12.200L-10.400 6.600z"/><path d="M-6.500 10.600L-10.400 6.600M5.600 -9.400L9.550 -5.450"/><path d="M-13.600 13.800l2.600 -1.200 -1.500 -1.500z" fill="#4a4a4a"/></g></svg>
<span class="t grid" style="left:42.9px;top:824.2px;transform:scaleX(0.8432);color:#2e2e2e;">adminsys</span>
<span class="t grid" style="left:146.0px;top:824.2px;transform:scaleX(0.8951);color:#2e2e2e;">192.168.1.1</span>
<span class="t grid" style="left:245.9px;top:824.2px;transform:scaleX(0.9009);color:#2e2e2e;">16/05/2022 15:11:51</span>
<span class="t grid" style="left:420.1px;top:824.2px;transform:scaleX(0.8797);color:#2e2e2e;">Suivi Candida...</span>
<span class="t grid" style="left:533.0px;top:824.2px;transform:scaleX(0.9000);color:#2e2e2e;">N° 1703: vendredi 2022-04-29 (jour 08:00 - 16:00) Moun...</span>
</div>
<div class="r" style="left:1094.2px;top:230.2px;width:416.3px;height:867px;background:#fdfdfd;box-sizing:border-box;border:1.4px solid #d9d9d9"></div>
<div class="r" style="left:1103.3px;top:262.4px;width:395.2px;height:30.3px;background:#cdcdcd;"></div>
<div class="r" style="left:1097px;top:293.1px;width:412px;height:1px;background:#ececec;"></div>
<div class="r" style="left:1097px;top:324.5px;width:412px;height:1px;background:#ececec;"></div>
<div class="r" style="left:1097px;top:355.9px;width:412px;height:1px;background:#ececec;"></div>
<div class="r" style="left:1097px;top:387.3px;width:412px;height:1px;background:#ececec;"></div>
<div class="r" style="left:1097px;top:418.8px;width:412px;height:1px;background:#ececec;"></div>
<div class="r" style="left:1097px;top:450.2px;width:412px;height:1px;background:#ececec;"></div>
<div class="r" style="left:1097px;top:481.6px;width:412px;height:1px;background:#ececec;"></div>
<div class="r" style="left:1097px;top:513.0px;width:412px;height:1px;background:#ececec;"></div>
<div class="r" style="left:1097px;top:544.4px;width:412px;height:1px;background:#ececec;"></div>
<div class="r" style="left:1097px;top:575.9px;width:412px;height:1px;background:#ececec;"></div>
<div class="r" style="left:1097px;top:607.3px;width:412px;height:1px;background:#ececec;"></div>
<div class="r" style="left:1097px;top:638.7px;width:412px;height:1px;background:#ececec;"></div>
<div class="r" style="left:1097px;top:670.1px;width:412px;height:1px;background:#ececec;"></div>
<div class="r" style="left:1097px;top:701.5px;width:412px;height:1px;background:#ececec;"></div>
<div class="r" style="left:1097px;top:733.0px;width:412px;height:1px;background:#ececec;"></div>
<div class="r" style="left:1097px;top:764.4px;width:412px;height:1px;background:#ececec;"></div>
<div class="r" style="left:1097px;top:795.8px;width:412px;height:1px;background:#ececec;"></div>
<div class="r" style="left:1097px;top:827.2px;width:412px;height:1px;background:#ececec;"></div>
<div class="r" style="left:1097px;top:858.6px;width:412px;height:1px;background:#ececec;"></div>
<div class="r" style="left:1097px;top:890.1px;width:412px;height:1px;background:#ececec;"></div>
<div class="r" style="left:1097px;top:921.5px;width:412px;height:1px;background:#ececec;"></div>
<div class="r" style="left:1097px;top:952.9px;width:412px;height:1px;background:#ececec;"></div>
<div class="r" style="left:1097px;top:984.3px;width:412px;height:1px;background:#ececec;"></div>
<div class="r" style="left:1097px;top:1015.7px;width:412px;height:1px;background:#ececec;"></div>
<div class="r" style="left:1097px;top:1047.2px;width:412px;height:1px;background:#ececec;"></div>
<div class="r" style="left:1097px;top:1078.6px;width:412px;height:1px;background:#ececec;"></div>
<div class="r" style="left:1272.5px;top:262px;width:1px;height:833.5px;background:#ececec;"></div>
<div class="r" style="left:1385.5px;top:262px;width:1px;height:833.5px;background:#ececec;"></div>
<div class="r" style="left:1498.5px;top:262px;width:1px;height:833.5px;background:#ececec;"></div>
<div class="r" style="left:1097.4px;top:233.4px;width:412px;height:29px;background:#f1f1f1;box-sizing:border-box;border:1px solid #c2c2c2;border-right:0"></div>
<div class="r" style="left:1271.8px;top:233.4px;width:1.8px;height:29px;background:#c6c6c6;"></div>
<div class="r" style="left:1384.8px;top:233.4px;width:1.8px;height:29px;background:#c6c6c6;"></div>
<div class="r" style="left:1497.8px;top:233.4px;width:1.8px;height:29px;background:#c6c6c6;"></div>
<span class="t grid" style="left:1101.0px;top:237.7px;transform:scaleX(0.8372);color:#3a3a3a;">Colonne modifiée</span>
<span class="t grid" style="left:1278.0px;top:237.7px;transform:scaleX(0.8725);color:#3a3a3a;">Ancienne valeur</span>
<span class="t grid" style="left:1391.0px;top:237.7px;transform:scaleX(0.8704);color:#3a3a3a;">Nouvelle valeur</span>
<span class="t grid" style="left:1105.0px;top:268.5px;transform:scaleX(0.8367);color:#2e2e2e;">Thumbs agence</span>
<span class="t grid" style="left:1280.0px;top:268.5px;transform:scaleX(0.7921);color:#2e2e2e;">T</span>
<span class="t grid" style="left:1393.0px;top:268.5px;transform:scaleX(0.7734);color:#2e2e2e;">Y</span>
<span class="t grid" style="left:1105.0px;top:299.9px;transform:scaleX(0.9136);color:#2e2e2e;">Statut</span>
<span class="t grid" style="left:1280.0px;top:299.9px;transform:scaleX(0.8172);color:#2e2e2e;">CFCAI</span>
<span class="t grid" style="left:1393.0px;top:299.9px;transform:scaleX(0.7944);color:#2e2e2e;">CFAFF</span>
<svg style="left:0;top:0" width="1530" height="1116" viewBox="0 0 1530 1116">
<line x1="967.700" y1="856" x2="1283.700" y2="390.700" stroke="#000" stroke-width="4"/>
<path d="M1289 382.900L1277.900 388.800L1287.800 395.900z" fill="#000"/>
<circle cx="950.950" cy="880.950" r="32" fill="#3f93b5" stroke="#1f4e72" stroke-width="3.700"/>
<circle cx="1308.450" cy="355.350" r="32" fill="#3f93b5" stroke="#1f4e72" stroke-width="3.700"/>
<clipPath id="c1"><rect x="930" y="860" width="40" height="31.500"/><rect x="948.700" y="891" width="7" height="8"/></clipPath>
<text x="950.600" y="897.100" text-anchor="middle" font-family="'Liberation Sans',sans-serif" font-weight="bold" font-size="38.500" fill="#fff" clip-path="url(#c1)">1</text>
<text x="1308.600" y="371.300" text-anchor="middle" font-family="'Liberation Sans',sans-serif" font-weight="bold" font-size="38.500" fill="#fff">2</text>
</svg>
</body></html>
